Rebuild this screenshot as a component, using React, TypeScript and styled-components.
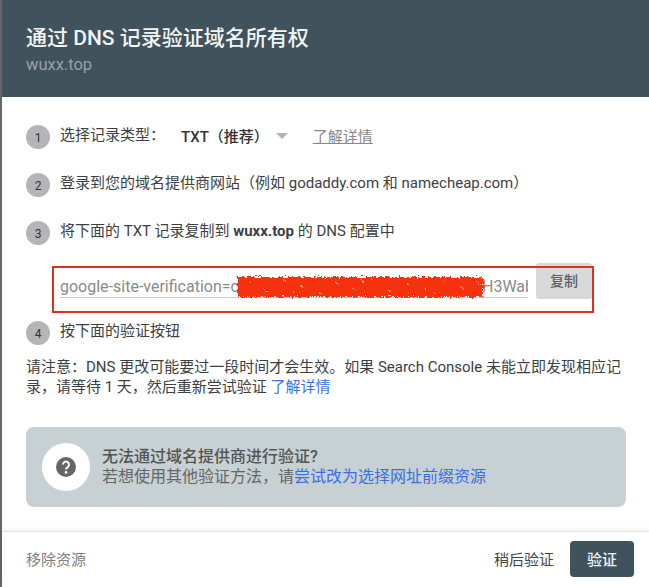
import React from "react";
import styled, { createGlobalStyle } from "styled-components";

const Global = createGlobalStyle`
  html, body { margin: 0; padding: 0; background: #fff; }
  body { font-family: "Roboto", "Noto Sans CJK SC", sans-serif; width: 649px; height: 587px; overflow: hidden; }
  * { box-sizing: border-box; }
`;
const Page = styled.div`width:649px;height:587px;display:flex;background:#666;overflow:hidden;`;
const Dialog = styled.div`margin-left:2px;flex:1;display:flex;flex-direction:column;background:#fff;min-width:0;`;
const Header = styled.header`height:97px;background:#40525b;padding:25px 24px 0;flex:none;`;
const Title = styled.h1`margin:0;font-size:21px;line-height:26px;font-weight:500;color:#f2f5f6;white-space:nowrap;`;
const Subtitle = styled.div`font-size:16.5px;line-height:20px;margin-top:4px;color:#93a3ab;`;
const Body = styled.main`flex:1;padding:28px 22px 0 24px;color:#3c4043;font-size:15px;`;
const Step = styled.div<{ $gap: number }>`display:flex;align-items:center;height:24px;margin-bottom:${(p) => p.$gap}px;`;
const Badge = styled.span`width:24px;height:24px;border-radius:50%;background:#b5b4b6;color:#333;font-size:12px;display:flex;align-items:center;justify-content:center;margin-right:10px;flex:none;padding-top:2px;`;
const StepText = styled.span`line-height:20px;margin-top:-4px;white-space:nowrap;`;
const RecordType = styled.span`margin-left:16px;font-weight:500;color:#333;margin-top:-4px;white-space:nowrap;`;
const Caret = styled.span`width:0;height:0;border-left:6px solid transparent;border-right:6px solid transparent;border-top:6px solid #b5b5b5;margin-left:7px;margin-top:-3px;`;
const Learn = styled.span`margin-left:25px;color:#888;text-decoration:underline;margin-top:-4px;white-space:nowrap;`;
const CopyRow = styled.div`position:relative;display:flex;margin-left:34px;height:36px;margin-top:-6px;margin-bottom:22px;`;
const Field = styled.div`width:468px;height:35px;border-bottom:1px solid #ccc;font-size:16px;line-height:32px;padding-top:8px;color:#8a8a8a;white-space:nowrap;overflow:hidden;display:flex;justify-content:space-between;`;
const Suffix = styled.span`width:46px;overflow:hidden;flex:none;`;
const CopyButton = styled.button`width:56px;height:36px;margin-left:8px;border:none;border-radius:3px;background:#d9d9d9;color:#5f5f5f;font:500 14px "Roboto","Noto Sans CJK SC",sans-serif;padding:0 0 2px;`;
const Highlight = styled.div`position:absolute;left:-8px;top:3px;width:542px;height:47px;border:2px solid #d9331a;pointer-events:none;`;
const Scribble = styled.svg`position:absolute;left:172px;top:7px;width:256px;height:34px;`;
const Note = styled.p`margin:12px 0 0 0;line-height:20px;width:596px;`;
const BlueLink = styled.a`color:#3b6fe0;`;
const Help = styled.section`margin-top:30px;width:600px;height:80px;border-radius:8px;background:#c7d0d3;display:flex;align-items:center;padding-left:16px;`;
const HelpDisc = styled.div`width:48px;height:48px;border-radius:50%;background:#fff;display:flex;align-items:center;justify-content:center;flex:none;`;
const HelpText = styled.div`margin-left:12px;font-size:16px;line-height:20px;color:#666;`;
const HelpTitle = styled.div`font-weight:500;color:#555;`;
const Footer = styled.footer`height:56px;flex:none;display:flex;align-items:center;justify-content:space-between;padding:0 15px 2px 24px;border-top:1px solid #e6e6e6;box-shadow:0 -2px 4px rgba(0,0,0,.06);font-size:15px;`;
const Remove = styled.span`color:#808080;`;
const Actions = styled.div`display:flex;align-items:center;gap:16px;`;
const Later = styled.span`color:#444;`;
const Verify = styled.button`width:64px;height:36px;border:none;border-radius:4px;background:#40525b;color:#f2f5f6;font:500 15px "Roboto","Noto Sans CJK SC",sans-serif;`;

const COLON = "\uFF1A";
const COMMA = "\uFF0C";
const LP = "\uFF08";
const RP = "\uFF09";
const STOP = "\u3002";

const specks = [
  [18, 12], [34, 21], [52, 10], [70, 17], [88, 23], [104, 12], [122, 19], [140, 9], [158, 22],
  [176, 14], [194, 20], [212, 11], [230, 18], [246, 13], [62, 22], [130, 11], [202, 23],
];

export default function App() {
  return (
    <Page>
      <Global />
      <Dialog>
        <Header>
          <Title>通过 DNS 记录验证域名所有权</Title>
          <Subtitle>wuxx.top</Subtitle>
        </Header>
        <Body>
          <Step $gap={24}><Badge>1</Badge><StepText>{`选择记录类型${COLON}`}</StepText><RecordType>{`TXT${LP}推荐${RP}`}</RecordType><Caret /><Learn>了解详情</Learn></Step>
          <Step $gap={24}><Badge>2</Badge><StepText>{`登录到您的域名提供商网站${LP}例如 godaddy.com 和 namecheap.com${RP}`}</StepText></Step>
          <Step $gap={24}><Badge>3</Badge><StepText>将下面的 TXT 记录复制到 <b>wuxx.top</b> 的 DNS 配置中</StepText></Step>
          <CopyRow>
            <Field><span>google-site-verification=c</span><Suffix>H3Wab</Suffix></Field>
            <CopyButton>复制</CopyButton>
            <Scribble viewBox="0 0 256 34">
              <defs>
                <filter id="rough" x="-5%" y="-30%" width="110%" height="160%">
                  <feTurbulence type="fractalNoise" baseFrequency="0.45" numOctaves="2" seed="7" result="n" />
                  <feDisplacementMap in="SourceGraphic" in2="n" scale="7" />
                  <feGaussianBlur stdDeviation="0.35" />
                </filter>
              </defs>
              <g filter="url(#rough)">
                <rect x="5" y="7" width="246" height="20" rx="2" fill="#f5300a" />
                {specks.map(([x, y]) => (
                  <circle key={`${x}-${y}`} cx={x} cy={y} r="0.9" fill="#ffb9a8" />
                ))}
              </g>
            </Scribble>
            <Highlight />
          </CopyRow>
          <Step $gap={0}><Badge>4</Badge><StepText>按下面的验证按钮</StepText></Step>
          <Note>{`请注意${COLON}DNS 更改可能要过一段时间才会生效${STOP}如果 Search Console 未能立即发现相应记录${COMMA}请等待 1 天${COMMA}然后重新尝试验证 `}<BlueLink>了解详情</BlueLink></Note>
          <Help>
            <HelpDisc>
              <svg width="20" height="20" viewBox="0 0 20 20"><circle cx="10" cy="10" r="10" fill="#666" /><path d="M7 7.6a3 3 0 1 1 4.8 2.4c-1.2.9-1.8 1.3-1.8 2.6" fill="none" stroke="#fff" strokeWidth="2" /><circle cx="10" cy="15.4" r="1.3" fill="#fff" /></svg>
            </HelpDisc>
            <HelpText>
              <HelpTitle>无法通过域名提供商进行验证?</HelpTitle>
              <div>{`若想使用其他验证方法${COMMA}请`}<BlueLink>尝试改为选择网址前缀资源</BlueLink></div>
            </HelpText>
          </Help>
        </Body>
        <Footer>
          <Remove>移除资源</Remove>
          <Actions><Later>稍后验证</Later><Verify>验证</Verify></Actions>
        </Footer>
      </Dialog>
    </Page>
  );
}
